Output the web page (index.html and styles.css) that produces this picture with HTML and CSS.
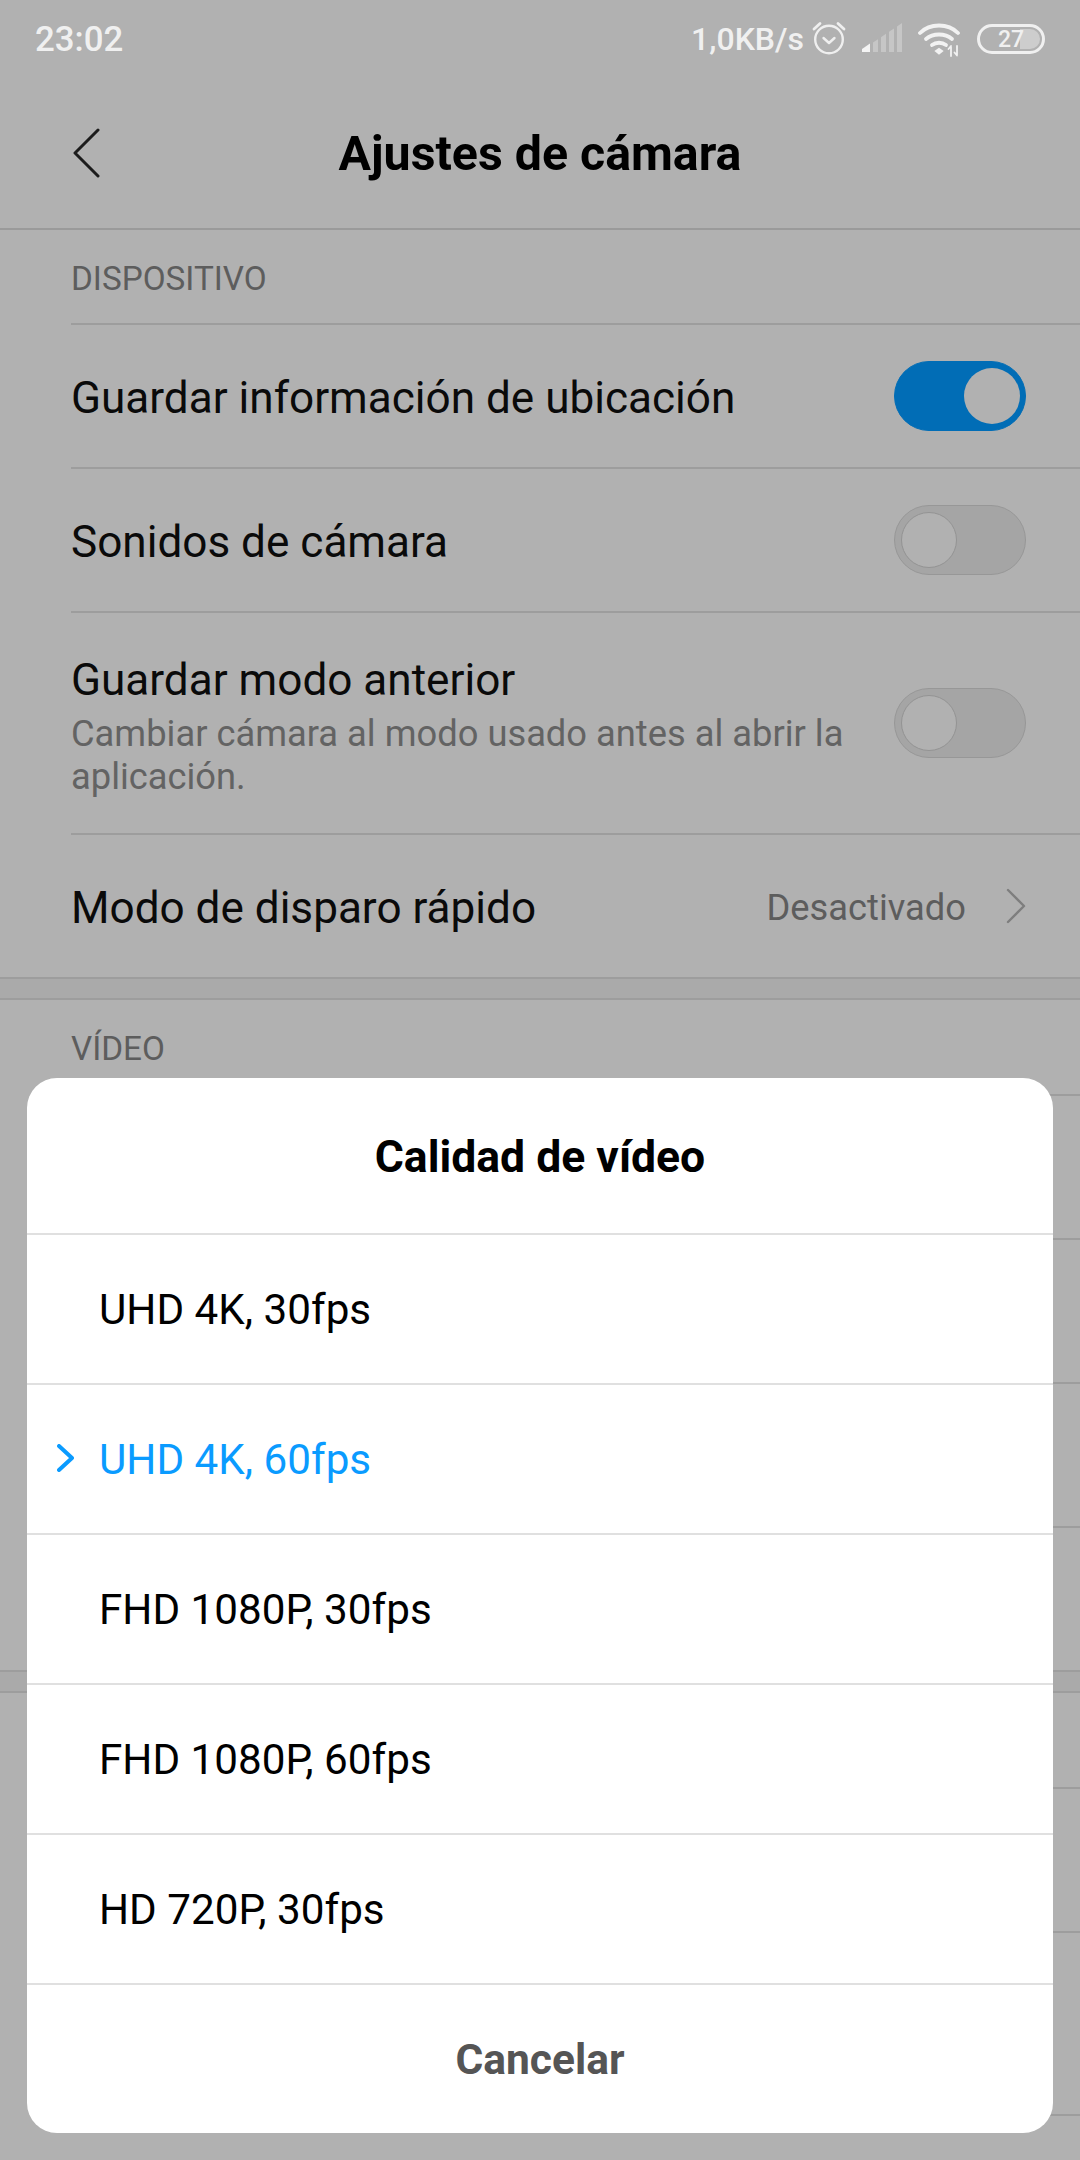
FILE: index.html
```html
<!DOCTYPE html>
<html lang="es">
<head>
<meta charset="utf-8">
<title>Ajustes de cámara</title>
<link rel="stylesheet" href="styles.css">
</head>
<body>
<div class="screen">
  <div class="statusbar">
    <span class="clock">23:02</span>
    <div class="status-right">
      <span class="speed">1,0KB/s</span>
      <svg class="ic-alarm" width="34" height="34" viewBox="0 0 34 34" fill="none" stroke="#efefef" stroke-linecap="round">
        <circle cx="17" cy="18.500" r="13.800" stroke-width="2.4"/>
        <path d="M11.5 17l5.500 5 5.500-5" stroke-width="2.4" stroke-linejoin="round"/>
        <path d="M2 8l6-5.500M32 8l-6-5.500" stroke-width="2.800"/>
      </svg>
      <svg class="ic-signal" width="40" height="30" viewBox="0 0 40 30">
        <path d="M0 29v-3l8-5.500V29z" fill="#f4f4f4"/>
        <path d="M11 29V19.500l5-3.300V29zM19 29V14.200l5-3.400V29zM27 29V8.800l5-3.400V29zM35 29V3.400L40 0v29z" fill="#c6c6c6"/>
      </svg>
      <svg class="ic-wifi" width="44" height="34" viewBox="0 0 44 34" fill="none" stroke="#f2f2f2" stroke-width="3.800" stroke-linecap="round">
        <path d="M2 10C12 0 30 0 40 10"/>
        <path d="M8 16c7-6 19-6 26 0"/>
        <path d="M14 22c4-3 10-3 14 0"/>
        <path d="M18 28l3 2.500 3-2.500-3-2z" fill="#f2f2f2" stroke-width="2"/>
        <path d="M33 33v-9M30.500 26l2.500-3M39 23v9M36.500 29.500l2.500 3" stroke-width="1.800"/>
      </svg>
      <div class="battery"><i class="battery-fill"></i><span class="battery-num">27</span></div>
    </div>
  </div>

  <header class="titlebar">
    <svg class="back" width="28" height="50" viewBox="0 0 28 50" fill="none" stroke="#1c1c1c" stroke-width="3" stroke-linecap="round" stroke-linejoin="round"><path d="M26 2L3 25l23 23"/></svg>
    <h1 class="title">Ajustes de cámara</h1>
  </header>

  <section class="group">
    <div class="group-label first">DISPOSITIVO</div>
    <div class="row row-b">
      <span class="row-title">Guardar información de ubicación</span>
      <span class="switch on"><i class="knob"></i></span>
    </div>
    <div class="row row-b">
      <span class="row-title">Sonidos de cámara</span>
      <span class="switch"><i class="knob"></i></span>
    </div>
    <div class="row row-c">
      <div class="row-text">
        <span class="row-title">Guardar modo anterior</span>
        <span class="row-sub">Cambiar cámara al modo usado antes al abrir la aplicación.</span>
      </div>
      <span class="switch"><i class="knob"></i></span>
    </div>
    <div class="row row-d">
      <span class="row-title">Modo de disparo rápido</span>
      <span class="row-value">Desactivado</span>
      <svg class="chev" width="20" height="36" viewBox="0 0 20 36" fill="none" stroke="#7e7e7e" stroke-width="2.400" stroke-linecap="round" stroke-linejoin="round"><path d="M2 2l16 16L2 34"/></svg>
    </div>
  </section>
  <div class="group-gap"></div>
  <section class="group">
    <div class="group-label">VÍDEO</div>
    <div class="row row-e"></div>
    <div class="row row-e"></div>
    <div class="row row-e"></div>
    <div class="row row-e"></div>
  </section>
  <div class="group-gap"></div>
  <section class="group">
    <div class="group-label"></div>
    <div class="row row-e"></div>
    <div class="row row-f"></div>
    <div class="row row-e"></div>
  </section>

  <div class="sheet">
    <div class="sheet-title">Calidad de vídeo</div>
    <div class="option">UHD 4K, 30fps</div>
    <div class="option selected">
      <svg class="tick" width="17" height="28" viewBox="0 0 17 28" fill="none" stroke="#0a9bff" stroke-width="4" stroke-linecap="round" stroke-linejoin="round"><path d="M2 2l13 12L2 26"/></svg>
      UHD 4K, 60fps
    </div>
    <div class="option">FHD 1080P, 30fps</div>
    <div class="option">FHD 1080P, 60fps</div>
    <div class="option">HD 720P, 30fps</div>
    <div class="cancel">Cancelar</div>
  </div>
</div>
</body>
</html>
```
FILE: styles.css
```css
* { box-sizing: border-box; }
html, body { margin: 0; padding: 0; }
body { font-family: Roboto, "Liberation Sans", sans-serif; background: #b1b1b1; }

.screen { position: relative; width: 1080px; height: 2160px; overflow: hidden; background: #b1b1b1; }

/* status bar */
.statusbar { height: 70px; display: flex; align-items: center; justify-content: space-between; padding: 8px 35px 0 35px; color: #f0f0f0; }
.clock { font-size: 34.800px; font-weight: 500; }
.status-right { display: flex; align-items: center; }
.speed { font-size: 32px; font-weight: 500; }
.ic-alarm { margin-left: 8px; margin-top: -3px; }
.ic-signal { margin-left: 16px; margin-top: -2px; }
.ic-wifi { margin-left: 16px; margin-top: 2px; }
.battery { position: relative; margin-left: 15px; width: 68px; height: 30px; border: 3px solid #f0f0f0; border-radius: 15px; display: flex; align-items: center; justify-content: center; }
.battery-fill { position: absolute; right: 2px; top: 2px; bottom: 2px; width: 20px; border-radius: 0 11px 11px 0; background: #cdcdcd; }
.battery-num { position: relative; font-size: 23px; font-weight: 500; line-height: 1; }

/* title bar */
.titlebar { position: relative; height: 160px; display: flex; align-items: center; justify-content: center; border-bottom: 2px solid #9a9a9a; padding-top: 9px; }
.back { position: absolute; left: 72px; top: 58px; }
.title { margin: 0; font-size: 48.300px; font-weight: 700; color: #000; }

/* settings groups */
.group-label { height: 94px; padding: 29px 0 0 71px; font-size: 33.300px; line-height: 40px; color: #5d5d5d; }
.group-label.first { height: 93px; }
.row { margin-left: 71px; padding-right: 54px; display: flex; align-items: center; border-top: 2px solid #9d9d9d; }
.row-b, .row-d, .row-e { height: 144px; }
.row-c { height: 222px; }
.row-f { height: 183px; }
.row-title { flex: 1; padding-top: 4px; font-size: 44.100px; color: #0a0a0a; }
.row-text { flex: 1; padding-top: 6px; display: flex; flex-direction: column; }
.row-text .row-title { flex: none; padding-top: 0; line-height: 50px; }
.row-sub { margin-top: 7px; width: 800px; font-size: 36.300px; line-height: 43px; color: #636363; }
.row-value { padding-top: 2px; font-size: 36.300px; color: #5d5d5d; margin-right: 40px; }

.switch { position: relative; flex: none; width: 132px; height: 70px; border-radius: 35px; background: #a5a5a5; border: 1.500px solid #979797; }
.switch .knob { position: absolute; left: 6px; top: 6px; width: 56px; height: 56px; border-radius: 50%; background: #b1b1b1; border: 1.500px solid #939393; }
.switch.on { background: #016db6; border-color: #016db6; }
.switch.on .knob { left: auto; right: 5px; border: 0; }

.group-gap { height: 23px; background: #aaaaaa; border-top: 2px solid #9d9d9d; border-bottom: 2px solid #9d9d9d; }

/* bottom sheet */
.sheet { position: absolute; left: 27px; top: 1078px; width: 1026px; height: 1055px; background: #fff; border-radius: 30px; display: flex; flex-direction: column; }
.sheet-title { height: 155px; padding-top: 2px; display: flex; align-items: center; justify-content: center; font-size: 44.500px; font-weight: 700; color: #000; }
.option { position: relative; height: 150px; display: flex; align-items: center; padding-left: 72px; font-size: 42.200px; color: #000; border-top: 2px solid #e0e0e0; }
.option.selected { color: #0a9bff; }
.tick { position: absolute; left: 30px; top: 59px; }
.cancel { flex: 1; display: flex; align-items: center; justify-content: center; font-size: 42.500px; font-weight: 700; color: #555; border-top: 2px solid #e0e0e0; }
```
